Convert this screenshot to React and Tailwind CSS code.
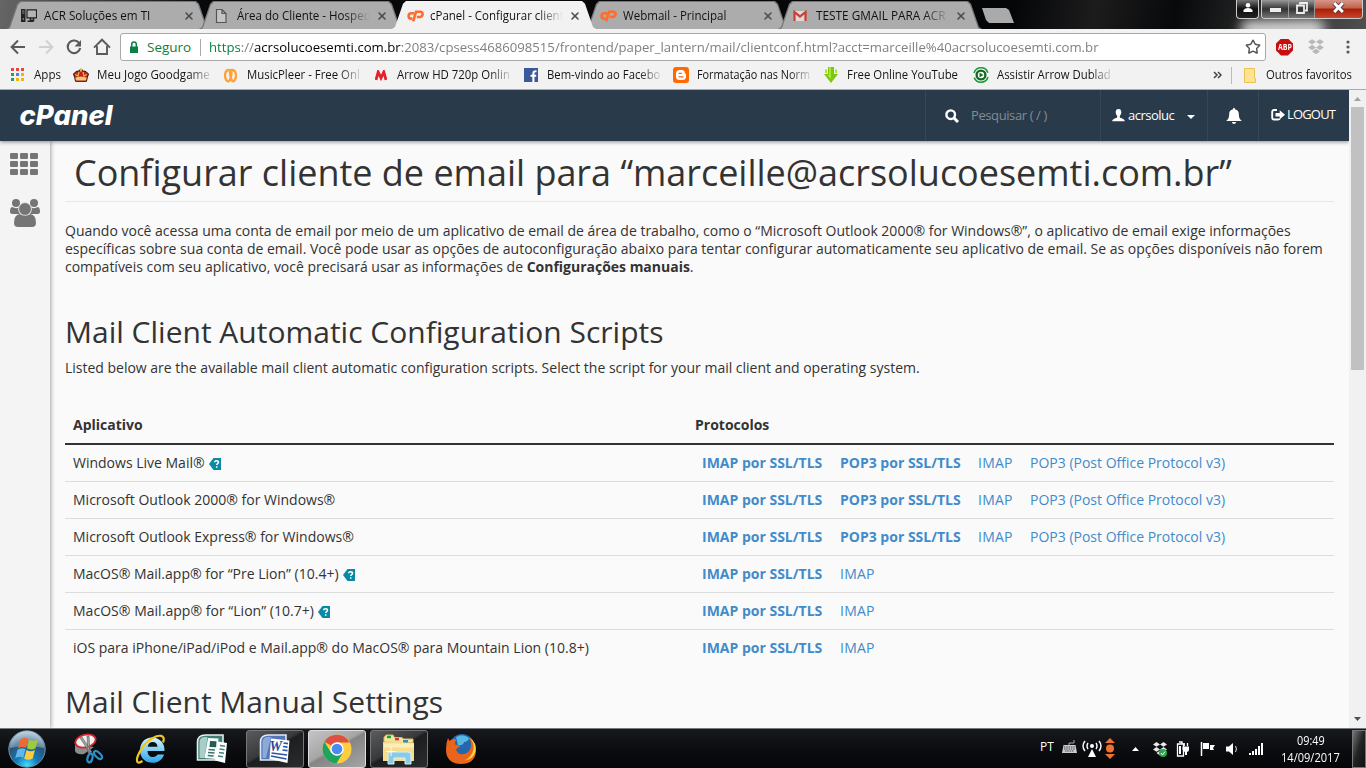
import React, { useLayoutEffect, useRef } from "react";
import { X, Star } from "lucide-react";

/* Text run set to a given width, either by tracking or by condensing. */
function T({ w, sq, className = "", children }) {
  const ref = useRef(null);
  useLayoutEffect(() => {
    const el = ref.current;
    el.style.letterSpacing = "0px";
    el.style.transform = "none";
    const nat = el.offsetWidth;
    if (sq) el.style.transform = `scaleX(${w / nat})`;
    else el.style.letterSpacing = `${(w - nat) / el.textContent.length}px`;
  }, [w, sq]);
  return (
    <span className={`block shrink-0 whitespace-nowrap ${className}`} style={{ width: w }}>
      <span ref={ref} className="inline-block origin-left">{children}</span>
    </span>
  );
}

const CpIcon = () => (
  <svg width="17" height="16" viewBox="0 0 17 16" fill="none" stroke="#ff6c2c" strokeWidth="2.6">
    <path d="M7.2 5.300H4.400C2.600 5.300 1.600 6.600 1.600 8s.9 2.600 2.500 2.600h1.300" />
    <path d="M6.200 13.400 9 3.800h4.200c1.600 0 2.400.9 2.400 2.200 0 1.700-1.100 3-2.900 3H9.800" />
  </svg>
);
const PcIcon = () => (
  <svg width="16" height="16" viewBox="0 0 16 16">
    <path d="M0 1h4.500v13H0z" fill="#222" /><path d="M1 3h2.500M1 5h2.500" stroke="#888" /><circle cx="2.300" cy="11" r=".8" fill="#aaa" />
    <path d="M6 1.800h9.500v8H6z" fill="#b4b4b4" stroke="#222" strokeWidth="1.200" /><path d="M9.500 10v2.500h3V10M6.500 13.300h6" fill="none" stroke="#222" strokeWidth="1.500" />
  </svg>
);
const PageIcon = () => (
  <svg width="16" height="16" viewBox="0 0 16 16" fill="#c4c4c4" stroke="#555" strokeWidth="1.200"><path d="M2.500 1.500h5.500l4 4v9H2.500zM8 1.500v4h4" /></svg>
);
const GmailIcon = () => (
  <svg width="16" height="16" viewBox="0 0 16 16"><path d="M1 3h12v10H1z" fill="#d9d9d9" /><path d="M1.500 13V4L7 8.500 12.500 4v9" fill="none" stroke="#d03c33" strokeWidth="2.200" /></svg>
);

function Tab({ icon, title, w, active }) {
  return (
    <div className={`relative -mr-[11px] h-[28px] w-[204px] shrink-0 [clip-path:polygon(0_100%,3px_93%,11px_10%,14px_0,190px_0,193px_10%,201px_93%,204px_100%)] ${active ? "z-10 bg-[#f2f2f2]" : "bg-[#777]"}`}>
      <div className={`flex h-full items-center pl-[15px] ${active ? "bg-[#f2f2f2] pt-[1px]" : "mt-px bg-[#acacac] [clip-path:polygon(1px_100%,4px_93%,12px_10%,15px_0,189px_0,192px_10%,200px_93%,203px_100%)]"}`}>
        <span className="mr-[6px] w-[17px]">{icon}</span>
        <div className={`w-[133px] overflow-hidden ${w > 125 ? "[mask-image:linear-gradient(to_right,black_108px,transparent_133px)]" : ""}`}>
          <T w={w} sq className="text-[12px] text-[#111]">{title}</T>
        </div>
        <X className="ml-[6px] text-[#4d4d4d]" size={12} strokeWidth={3.200} />
      </div>
    </div>
  );
}

function WindowButtons() {
  return (
    <div className="absolute top-0 left-[1236px] flex h-[19px] gap-[2px]">
      <div className="flex w-[23px] items-center justify-center rounded-b-[4px] border border-t-0 border-[#ccc] bg-gradient-to-b from-[#777] via-[#111] to-[#222]">
        <svg className="-mt-[3px]" width="10" height="11" viewBox="0 0 10 11" fill="#fff"><circle cx="5" cy="3.200" r="2.300" /><path d="M.5 10V8Q2 6 5 6t4.500 2v2z" /></svg>
      </div>
      <div className="flex overflow-hidden rounded-b-[4px] border border-t-0 border-[#ccc]">
        <div className="flex w-[27px] items-center justify-center border-r border-[#999] bg-gradient-to-b from-[#999] via-[#333] to-[#777]"><div className="mt-[2px] h-[4px] w-[11px] bg-[#eee]" /></div>
        <div className="flex w-[26px] items-center justify-center border-r border-[#999] bg-gradient-to-b from-[#999] via-[#333] to-[#777]">
          <svg className="-mt-[3px]" width="12" height="12" viewBox="0 0 12 12" fill="none" stroke="#eee" strokeWidth="1.800"><path d="M4 2.500V1h7v7.500H9" /><path d="M1 3.500h7v7.500H1z" /></svg>
        </div>
        <div className="flex w-[47px] items-center justify-center bg-[linear-gradient(to_bottom,#d79688_0,#c2604a_45%,#a91d06_50%,#c8452b_100%)]">
          <svg className="-mt-[3px]" width="13" height="11" viewBox="0 0 13 11"><path d="M2 1 11 10M11 1 2 10" stroke="#5b3540" strokeWidth="4.600" /><path d="M2.200 1 10.800 10M10.800 1 2.200 10" stroke="#fff" strokeWidth="3" /></svg>
        </div>
      </div>
    </div>
  );
}

function TabStrip() {
  return (
    <div className="relative flex h-[29px] shrink-0 overflow-hidden bg-[linear-gradient(100deg,#666_0,#333_120px,#08090b_200px,#050608_1000px,#1c1c1d_1080px,#08090a_1160px,#555_1366px)] pt-px pl-[6px]">
      <div className="absolute top-[20px] left-[1240px] h-[18px] w-[85px] rounded-full bg-white/80 blur-[6px]" />
      <Tab icon={<PcIcon />} title="ACR Soluções em TI" w={106} />
      <Tab icon={<PageIcon />} title="Área do Cliente - Hosped" w={134} />
      <Tab icon={<CpIcon />} title="cPanel - Configurar client" w={134} active />
      <Tab icon={<CpIcon />} title="Webmail - Principal" w={103} />
      <Tab icon={<GmailIcon />} title="TESTE GMAIL PARA ACR" w={130} />
      <div className="mt-[7px] ml-[11px] h-[15px] w-[32px] bg-[#aaa] [clip-path:polygon(0_0,24px_0,27px_2px,32px_100%,7px_100%,4px_12px)]" />
      <WindowButtons />
    </div>
  );
}

const DropboxIcon = ({ c, s = 16 }) => (
  <svg width={s} height={s} viewBox="0 0 16 16" fill={c}><path d="m4.500 1 3.500 2.400-3.500 2.400L1 3.400zM11.500 1 15 3.400l-3.500 2.400L8 3.400zM4.500 6 8 8.400l-3.500 2.400L1 8.400zM11.500 6 15 8.400l-3.500 2.400L8 8.400zM8 9.500l3.500 2.400L8 14.500l-3.500-2.600z" /></svg>
);

function Toolbar() {
  return (
    <div className="flex h-[32px] shrink-0 items-center bg-[#f2f2f2] pt-[4px]">
      <svg className="ml-[10px] shrink-0" width="16" height="16" viewBox="0 0 16 16" fill="none" stroke="#5a5a5a" strokeWidth="2"><path d="M15 8H2M8 1.500 1.600 8 8 14.500" /></svg>
      <svg className="ml-[12px] shrink-0" width="16" height="16" viewBox="0 0 16 16" fill="none" stroke="#d0d0d0" strokeWidth="2"><path d="M1 8h13M8 1.500 14.400 8 8 14.500" /></svg>
      <svg className="ml-[12px] shrink-0" width="16" height="16" viewBox="0 0 16 16"><path d="M13.400 4.500A6.300 6.300 0 1 0 14.200 9" fill="none" stroke="#5a5a5a" strokeWidth="2.100" /><path d="M15 1v6.500H8.500z" fill="#5a5a5a" /></svg>
      <svg className="ml-[11px] shrink-0" width="18" height="18" viewBox="0 0 18 18" fill="none" stroke="#5a5a5a" strokeWidth="1.900"><path d="M1 9.600 9 1.700l8 7.900M4 8v8h10V8" /></svg>
      <div className="ml-[9px] flex h-[28px] w-[1146px] shrink-0 items-center rounded-[3px] border border-[#a9a9a9] bg-white text-[13.500px]">
        <svg className="ml-[8px]" width="10" height="13" viewBox="0 0 10 13"><path d="M1 5.500h8V12H1z" fill="#0b8043" /><path d="M2.700 6V3.200a2.300 2.300 0 0 1 4.600 0V6" fill="none" stroke="#0b8043" strokeWidth="1.500" /></svg>
        <T w={44} sq className="ml-[8px] text-[#0b8043]">Seguro</T>
        <span className="mr-[8px] ml-[9px] h-[17px] w-px bg-[#aaa]" />
        <T w={890} sq className="text-[#808080]">
          <span className="text-[#0b8043]">https</span>://<span className="text-black">acrsolucoesemti.com.br</span>:2083/cpsess4686098515/frontend/paper_lantern/mail/clientconf.html?acct=marceille%40acrsolucoesemti.com.br
        </T>
        <Star className="mr-[4px] ml-auto text-[#555]" size={16} strokeWidth={2.200} strokeLinejoin="miter" />
      </div>
      <div className="ml-[10px] flex size-[17px] shrink-0 items-center justify-center bg-[#c70d0d] [clip-path:polygon(30%_0,70%_0,100%_30%,100%_70%,70%_100%,30%_100%,0_70%,0_30%)]">
        <T w={14} sq className="text-[8px] leading-none font-bold text-white">ABP</T>
      </div>
      <span className="ml-[14px]"><DropboxIcon c="#b8b8b8" s={18} /></span>
      <svg className="ml-[21px]" width="4" height="14" viewBox="0 0 4 14" fill="#5a5a5a"><circle cx="2" cy="2" r="1.600" /><circle cx="2" cy="7" r="1.600" /><circle cx="2" cy="12" r="1.600" /></svg>
    </div>
  );
}

const bmIcons = {
  apps: (
    <svg width="14" height="14" viewBox="0 0 14 14">
      <path d="M0 0h3v3H0zM5 0h3v3H5zM10 0h3v3h-3z" fill="#e8453c" />
      <path d="M0 5h3v3H0z" fill="#2d9d57" /><path d="M5 5h3v3H5z" fill="#4688f1" /><path d="M10 5h3v3h-3z" fill="#f6b400" />
      <path d="M0 10h3v3H0z" fill="#2d9d57" /><path d="M5 10h3v3H5zM10 10h3v3h-3z" fill="#f6b400" />
    </svg>
  ),
  crown: (
    <svg width="16" height="14" viewBox="0 0 16 14"><path d="M2.500 13.300 1.700 9.500.5 6l2.500-2.500L5.500 3 8 1l2.500 2 2.500.500L15.500 6l-1.200 3.500-.8 3.800z" fill="#c21f1f" stroke="#2a1505" /><path d="M2 6.500 5 8l1-4M14 6.500 11 8l-1-4" fill="none" stroke="#e8b24c" strokeWidth="1.300" /><path d="M2.300 9.500 8 8.500l5.700 1-.7 3H3z" fill="#f0c878" /><path d="M8 .5v3" stroke="#e8b24c" strokeWidth="2" /></svg>
  ),
  music: (
    <svg width="15" height="15" viewBox="0 0 15 15" fill="none" stroke="#ffa238" strokeWidth="2.800"><path d="M3.500 12.500C1 9 1.500 2 6 2c4 0 2.500 8 .5 10.500-1 1.200-2.500.8-3 0M11.500 12.500C14 9 13.500 2 9 2 7.500 2 7 3 7 4.500c0 3 1 6.500 2 8 .8 1.200 2 .8 2.500 0" strokeWidth="2.300" /></svg>
  ),
  arrow: <svg width="12" height="11" viewBox="0 0 12 11"><path d="m1 10 2.200-8L6 8l2.800-6L11 10" fill="none" stroke="#e3212d" strokeWidth="2.800" /></svg>,
  fb: <svg width="14" height="14" viewBox="0 0 14 14"><path d="M0 0h14v14H0z" fill="#3b5998" /><path d="M9.400 14V5.200c0-1.500.8-2 3.100-1.900M6.500 7.800h5.700" fill="none" stroke="#fff" strokeWidth="2.100" /></svg>,
  blogger: <svg width="16" height="16" viewBox="0 0 16 16"><rect width="16" height="16" rx="3" fill="#ff6a00" /><path d="M6.500 3h2.300c1.800 0 3 1.300 3 2.800 0 .8.300 1 1.200 1v2.900c0 2-1.400 3.300-3.300 3.300H6.400C4.400 13 3 11.700 3 9.700V6.400C3 4.400 4.500 3 6.500 3z" fill="#fff" /><path d="M6 6.300h2.500M6 9.800h4" stroke="#ff6a00" strokeWidth="1.300" strokeLinecap="round" /></svg>,
  down: <svg width="14" height="16" viewBox="0 0 14 16"><path d="M4 0h6v7h4l-7 9L0 7h4z" fill="#7cc80f" /><path d="M1 2.500V6h2V2.500M11 2.500V6h2V2.500" fill="#a9e72f" /><path d="M5 0h2v12L3 8h2z" fill="#a8e63c" /></svg>,
  play: <svg width="16" height="16" viewBox="0 0 16 16"><circle cx="8" cy="8" r="7.200" fill="#fff" stroke="#169b2c" strokeWidth="1.600" strokeDasharray="18 4.600" strokeDashoffset="-2" /><circle cx="8" cy="8" r="4.400" fill="#fff" stroke="#19662a" strokeWidth="2.400" /><path d="m6.500 5.600 4 2.400-4 2.400z" fill="#117a20" /></svg>,
};

function Bookmark({ icon, iw, gap, w, title, fade, mr }) {
  return (
    <div className="flex shrink-0 items-center" style={{ marginRight: mr }}>
      <span className="flex shrink-0" style={{ width: iw, marginRight: gap }}>{bmIcons[icon]}</span>
      <span className={fade ? "[mask-image:linear-gradient(to_right,black_82%,rgba(0,0,0,.15))]" : ""}><T w={w} sq>{title}</T></span>
    </div>
  );
}

function Bookmarks() {
  return (
    <div className="flex h-[29px] shrink-0 items-center border-b border-[#aaa] bg-[#f2f2f2] pl-[11px] text-[12px] text-[#151515]">
      <Bookmark icon="apps" iw={14} gap={9} w={27} title="Apps" mr={12} />
      <Bookmark icon="crown" iw={16} gap={8} w={113} title="Meu Jogo Goodgame" fade mr={13} />
      <Bookmark icon="music" iw={15} gap={9} w={113} title="MusicPleer - Free Onl" fade mr={15} />
      <Bookmark icon="arrow" iw={13} gap={9} w={113} title="Arrow HD 720p Onlin" fade mr={14} />
      <Bookmark icon="fb" iw={14} gap={9} w={113} title="Bem-vindo ao Facebo" fade mr={13} />
      <Bookmark icon="blogger" iw={16} gap={8} w={113} title="Formatação nas Norm" fade mr={14} />
      <Bookmark icon="down" iw={14} gap={9} w={111} title="Free Online YouTube" mr={15} />
      <Bookmark icon="play" iw={16} gap={8} w={114} title="Assistir Arrow Dublad" fade mr={102} />
      <svg width="9" height="8" viewBox="0 0 9 8" fill="none" stroke="#444" strokeWidth="1.500"><path d="m1 1 3 3-3 3M5 1l3 3-3 3" /></svg>
      <span className="mr-[12px] ml-[9px] h-[17px] w-px bg-[#bbb]" />
      <svg width="13" height="15" viewBox="0 0 13 15"><path d="M.5.500h10v10h1v4H.5z" fill="#ffe392" stroke="#e8c34f" /></svg>
      <T w={86} sq className="ml-[9px]">Outros favoritos</T>
    </div>
  );
}

function Header() {
  return (
    <header className="relative z-10 flex h-[51px] w-[1349px] shrink-0 items-stretch bg-[#293a4a] text-white shadow-[0_1px_4px_rgba(0,0,0,.45)]">
      <svg className="ml-[18px] h-[51px] w-[100px]" viewBox="0 0 100 51">
        <text x="1.500" y="35" textLength="93" lengthAdjust="spacingAndGlyphs" fill="#fff" fontFamily="Inter, sans-serif" fontWeight="800" fontStyle="italic" fontSize="27">cPanel</text>
      </svg>
      <div className="ml-auto flex items-center">
        <div className="flex h-full w-[175px] items-center border-l border-[#33485b] pl-[19px]">
          <svg width="14" height="14" viewBox="0 0 14 14" fill="none" stroke="#fff" strokeWidth="2.400"><circle cx="5.700" cy="5.700" r="4.300" /><path d="m9 9 4 4" strokeWidth="3" /></svg>
          <T w={76} className="ml-[12px] text-[13px] text-[#848c94]">Pesquisar ( / )</T>
        </div>
        <div className="flex h-full w-[107px] items-center border-l border-[#33485b] pl-[11px]">
          <svg width="13" height="13" viewBox="0 0 13 13" fill="#fff"><path d="M6.500 0C4.300 0 3.600 1.600 3.700 3.500c.1 1.600.8 2.800 1.500 3.400v1.300C4.300 9.300.2 9.600.2 12.300h12.600c0-2.700-4.100-3-5-4.100V6.900c.7-.6 1.400-1.800 1.500-3.400C9.400 1.600 8.700 0 6.500 0z" /></svg>
          <T w={46} className="ml-[3px] text-[13px]">acrsoluc</T>
          <svg className="mt-[3px] ml-[13px]" width="8" height="4" viewBox="0 0 8 4"><path d="M0 0h8L4 4z" fill="#fff" /></svg>
        </div>
        <div className="flex h-full w-[51px] items-center border-l border-[#33485b] pl-[18px]">
          <svg width="16" height="16" viewBox="0 0 16 16" fill="#fff"><path d="M8 0c-.8 0-1 .6-1 1.200C4.200 1.800 3.200 3.500 3.200 6c0 4-1.200 5.500-3 7h15.600c-1.800-1.500-3-3-3-7 0-2.500-1-4.200-3.800-4.800C9 .6 8.800 0 8 0zM6 14h4c0 1.200-.9 2-2 2s-2-.8-2-2z" /></svg>
        </div>
        <div className="flex h-full w-[91px] items-center border-l border-[#33485b] pb-[2px] pl-[12px]">
          <svg width="14" height="12" viewBox="0 0 14 12"><path d="M6 1H3C1.700 1 1.200 1.700 1.200 3v5.500c0 1.300.5 2 1.800 2h4c1 0 1.600-.4 1.800-1" fill="none" stroke="#fff" strokeWidth="1.900" /><path d="M4.500 4h4.200V1.200L14 5.800 8.700 10.300V7.500H4.500z" fill="#fff" /></svg>
          <T w={48} className="ml-[2px] text-[13px]">LOGOUT</T>
        </div>
      </div>
    </header>
  );
}

function Sidebar() {
  return (
    <aside className="flex w-[50px] shrink-0 flex-col items-start bg-[#f4f4f4] pl-[10px] shadow-[1px_0_4px_rgba(0,0,0,.35)]">
      <svg className="mt-[12px]" width="28" height="22" viewBox="0 0 28 22" fill="#757575">
        {[0, 8, 16].map((y) => [0, 10, 20].map((x) => <rect key={`${x}-${y}`} x={x} y={y} width="8" height="6" rx="1.300" />))}
      </svg>
      <svg className="mt-[24px]" width="30" height="28" viewBox="0 0 30 28" fill="#757575">
        <circle cx="6" cy="4" r="4" /><circle cx="24" cy="4" r="4" />
        <path d="M2 8q4 2 7 .5Q8 12 10 15H2.500Q0 15 0 13 0 8.500 2 8zM28 8q-4 2-7 .5 1 3.500-1 6.500h7.500Q30 15 30 13q0-4.500-2-5z" />
        <circle cx="15" cy="10" r="6.400" stroke="#f4f4f4" strokeWidth=".8" />
        <path d="M9.500 15q5.500 3.500 11 0 5.500 1 5.500 9 0 4-4 4H8q-4 0-4-4 0-8 5.500-9z" />
      </svg>
    </aside>
  );
}

const Help = () => (
  <svg className="mt-[2px] ml-[4px]" width="12" height="12" viewBox="0 0 12 12"><path d="M0 6 4.500 0H12v12H4.500z" fill="#0a89a5" /><path d="M5.600 4.300c.1-1 .9-1.500 1.900-1.500 1.200 0 2 .6 2 1.500 0 1.300-1.800 1.300-1.800 2.700M7.700 8.200v1.500" fill="none" stroke="#fff" strokeWidth="1.500" /></svg>
);

const rows = [
  ["Windows Live Mail®", 132, true, true],
  ["Microsoft Outlook 2000® for Windows®", 262, false, true],
  ["Microsoft Outlook Express® for Windows®", 281, false, true],
  ["MacOS® Mail.app® for “Pre Lion” (10.4+)", 266, true, false],
  ["MacOS® Mail.app® for “Lion” (10.7+)", 241, true, false],
  ["iOS para iPhone/iPad/iPod e Mail.app® do MacOS® para Mountain Lion (10.8+)", 516, false, false],
];

function Content() {
  return (
    <main className="ml-[15px] flex w-[1269px] flex-col text-[14px] leading-[18px] text-[#333]">
      <h1 className="flex h-[61px] shrink-0 items-center border-b border-[#e8e8e8] pl-[9px] text-[36px] leading-[40px]">
        <T w={1158} className="mt-[4px]">Configurar cliente de email para “marceille@acrsolucoesemti.com.br”</T>
      </h1>
      <div className="mt-[20px]">
        <T w={1226}>Quando você acessa uma conta de email por meio de um aplicativo de email de área de trabalho, como o “Microsoft Outlook 2000® for Windows®”, o aplicativo de email exige informações</T>
        <T w={1258}>específicas sobre sua conta de email. Você pode usar as opções de autoconfiguração abaixo para tentar configurar automaticamente seu aplicativo de email. Se as opções disponíveis não forem</T>
        <T w={629}>compatíveis com seu aplicativo, você precisará usar as informações de <b>Configurações manuais</b>.</T>
      </div>
      <h2 className="mt-[36px] text-[30px] leading-[40px]"><T w={598}>Mail Client Automatic Configuration Scripts</T></h2>
      <div className="mt-[7px]"><T w={855}>Listed below are the available mail client automatic configuration scripts. Select the script for your mail client and operating system.</T></div>
      <div className="mt-[39px] flex h-[29px] shrink-0 border-b-2 border-[#333] pl-[8px] font-bold">
        <T w={70}>Aplicativo</T>
        <T w={74} className="ml-[552px]">Protocolos</T>
      </div>
      {rows.map(([name, w, help, pop], i) => (
        <div key={name} className={`flex shrink-0 items-center ${i < 5 ? "h-[37px] border-b border-[#ddd]" : "h-[36px]"}`}>
          <div className="flex w-[637px] items-center pl-[8px]"><T w={w}>{name}</T>{help && <Help />}</div>
          <div className="flex items-center text-[#428bca]">
            <T w={120} className="font-bold">IMAP por SSL/TLS</T>
            {pop && <T w={121} className="ml-[18px] font-bold">POP3 por SSL/TLS</T>}
            <T w={35} className={pop ? "ml-[17px]" : "ml-[18px]"}>IMAP</T>
            {pop && <T w={195} className="ml-[17px]">POP3 (Post Office Protocol v3)</T>}
          </div>
        </div>
      ))}
      <h2 className="mt-[16px] text-[30px] leading-[40px]"><T w={378}>Mail Client Manual Settings</T></h2>
    </main>
  );
}

function Scrollbar() {
  return (
    <div className="flex w-[17px] shrink-0 flex-col items-center bg-[#f1f1f1]">
      <svg className="mt-[7px]" width="7" height="4"><path d="M0 4h7L3.500 0z" fill="#a3a3a3" /></svg>
      <div className="mt-[6px] h-[263px] w-[13px] bg-[#c1c1c1]" />
      <svg className="mt-auto mb-[7px]" width="7" height="4"><path d="M0 0h7L3.500 4z" fill="#505050" /></svg>
    </div>
  );
}

function StartOrb() {
  return (
    <svg width="38" height="38" viewBox="0 0 38 38">
      <defs>
        <radialGradient id="orb" cx=".5" cy=".95" r=".9"><stop offset="0" stopColor="#3fe0ff" /><stop offset=".35" stopColor="#1477b5" /><stop offset=".7" stopColor="#2b5478" /><stop offset="1" stopColor="#9ab9cf" /></radialGradient>
      </defs>
      <circle cx="19" cy="19" r="18.200" fill="url(#orb)" stroke="#6d93ab" />
      <path d="M2 18a17 17 0 0 1 34 0Q19 14 2 18z" fill="#fff" opacity=".3" />
      <path d="M12.500 9.500q4-3 7.500-.5l-2 9q-4-2-8 .5z" fill="#ee6a35" /><path d="M21 9.500q4.500 2.500 9 0l-2.500 8.800q-4 2.500-8.500 0z" fill="#9bcc3c" />
      <path d="M9.500 19.800q4-3 8-.5l-2.300 8.500q-4-2.500-8 .5z" fill="#62b7ea" /><path d="M18.500 20q4.500 2.500 8.500 0l-2.300 8.500q-4.500 2.500-8.500 0z" fill="#fdcb40" />
    </svg>
  );
}
const Snip = () => (
  <svg width="32" height="32" viewBox="0 0 32 32">
    <path d="M2 12v6q2 4 9 3l10-7z" fill="#8c8c8c" />
    <ellipse cx="12.500" cy="8" rx="10.300" ry="6.300" fill="#f3f3f3" stroke="#d1262f" strokeWidth="1.800" transform="rotate(-14 12.500 8)" />
    <path d="m7 5 2-1 10 15-2 1zM14 3h2l1 17h-2z" fill="#a6a6a6" stroke="#555" strokeWidth=".6" />
    <g fill="none" stroke="#2e8fce" strokeWidth="2.200"><ellipse cx="17" cy="25" rx="2.400" ry="4.500" transform="rotate(15 17 25)" /><ellipse cx="25" cy="22" rx="2.400" ry="5" transform="rotate(-45 25 22)" /></g>
  </svg>
);
const Ie = () => (
  <svg width="32" height="32" viewBox="0 0 32 32" fill="none">
    <defs><linearGradient id="ieg" x2="0" y2="1"><stop stopColor="#d3f5ff" /><stop offset="1" stopColor="#2aa5ea" /></linearGradient></defs>
    <path d="M17 4.500C24.500 4.500 30 10 29.500 18H12.500c.2 4 2.500 6 5.500 6 2.300 0 3.700-1 4.500-2.500h6.500C27.500 26.500 23.500 29.800 17.700 29.800 10 29.800 5 24.500 5 17.200S10 4.500 17 4.500zM12.700 13.800h9.800c-.2-3-2-4.800-4.700-4.800-2.800 0-4.700 1.700-5.100 4.800z" fill="url(#ieg)" />
    <path d="M28 9.500c3-8-4-8.500-12-3.500S0 25 2.500 29q1.500 1.500 5-1" stroke="#f4c51e" strokeWidth="2.200" />
  </svg>
);
const Publisher = () => (
  <svg width="32" height="32" viewBox="0 0 32 32">
    <path d="M1.500 27V9q0-7 8-7H27v25z" fill="#3f7f7a" stroke="#e4f1ee" strokeWidth="1.600" />
    <path d="M3.500 25V9.500Q3.500 4 9 4h2.500L8.500 25z" fill="#a9cdc7" />
    <path d="m12 5 10.500.5L20.500 26l-12-1z" fill="#fbfdfc" />
    <path d="m14 8 6.500.3-.4 6-6.600-.3z" fill="#225d58" /><path d="m12.500 16.500 6.500.500M12 19.500l6.500.5M11.700 22.500l6 .5" stroke="#38716d" strokeWidth="1.500" />
    <path d="m22 8.500 9 1.500-2 20-10-2.500z" fill="#fff" /><path d="m24 12.500 5 .8M23.500 16l5 .8M23 19.500l5 .8M22 23l5 .8" stroke="#438280" strokeWidth="1.500" />
  </svg>
);
const Word = () => (
  <svg width="32" height="32" viewBox="0 0 32 32">
    <path d="M1.500 27V9q0-7 8-7H27v25z" fill="#5277b9" stroke="#dfe8f7" strokeWidth="1.600" />
    <path d="M3.500 25V9.500Q3.500 4 9 4h3L7 25z" fill="#8da9d8" />
    <path d="m12 5.500 18.500 2L28.500 30l-18-4z" fill="#fff" />
    <text x="10.500" y="18" fill="#234a9b" fontFamily="Liberation Serif, serif" fontWeight="700" fontStyle="italic" fontSize="14">W</text>
    <path d="m24.500 10 4.500.6M24 13.500l4.500.6M23.500 17l5 .6M12.500 20l15.500 2M12 23l15.500 3" stroke="#2d55a7" strokeWidth="1.700" />
  </svg>
);
const Chrome = () => (
  <svg width="30" height="30" viewBox="0 0 30 30"><circle cx="15" cy="15" r="14.500" fill="#ffcd40" /><path d="M15 15 2.400 7.800A14.500 14.500 0 0 1 27.600 8.500H15z" fill="#dd5144" /><path d="M2.400 7.800A14.500 14.500 0 0 0 14.500 29.500L21 18.500 15 21.500 9 18.500z" fill="#1da462" /><circle cx="15" cy="15" r="6.700" fill="#fff" /><circle cx="15" cy="15" r="5.300" fill="#4a8af4" /></svg>
);
const Explorer = () => (
  <svg width="34" height="32" viewBox="0 0 34 32">
    <path d="M2 9V4.500L4 2h7l1.500 2.500H20L21.500 6H31v4z" fill="#f7e4a0" stroke="#d9b960" />
    <path d="M5 4h4" stroke="#1aa32e" strokeWidth="2.400" /><path d="M13 6.200h4" stroke="#d23a2b" strokeWidth="2.400" /><path d="M21 8.200h5" stroke="#2191d6" strokeWidth="2.400" />
    <path d="M1 9h20l1 1h10v18H1z" fill="#f6dd8c" /><path d="M2 10.500h30v4H2z" fill="#fbeeb9" />
    <path d="M6 31V22q0-3 3-3h17q3 0 3 3v9h-6v-6H12v6z" fill="#8ccbe8" stroke="#d7f2fb" /><path d="M9 14v9M4.500 18.500h9" stroke="#fff" opacity=".9" />
  </svg>
);
const Firefox = () => (
  <svg width="32" height="32" viewBox="0 0 32 32">
    <circle cx="17" cy="13.500" r="12.500" fill="#2467ac" /><path d="M11 4q7-4 13 1-1 4-5 4-1 4-6 3z" fill="#55b8e6" />
    <path d="M3 5 4.500 8q3-3 7-1.500Q9.500 8.500 10 11.500l5.500 1.200-4.500 3.500q1.500 5.500 7 5 6.500-1 8-7.500.5-5-2-9.500 7 5.500 7 12.300Q31 31 16 31 1 30.500 1 16.500 1 9.500 3 5z" fill="#ea651b" />
    <path d="M24.500 4.500q5 5 4 12-2 8-9 11 9-1.500 11-9 1.500-9-6-14z" fill="#ffd43c" />
  </svg>
);

function TaskButton({ children, active, className }) {
  return (
    <div className={`flex h-[38px] w-[58px] shrink-0 items-center justify-center rounded-[3px] border ${active ? "border-[#ddd] bg-[linear-gradient(150deg,#c4c4c4_0,#a6a6a6_45%,#858585_50%,#a5a5a5_100%)]" : "border-[#777] bg-[linear-gradient(150deg,#5c5c5e_0,#38393b_45%,#1d1e20_50%,#2b2c2e_100%)]"} ${className}`}>{children}</div>
  );
}

function Taskbar() {
  return (
    <footer className="flex h-[40px] shrink-0 items-center border-t border-[#74797e] bg-gradient-to-b from-[#17191c] via-[#0b0d10] to-[#050608] text-[12px] text-white">
      <span className="ml-[8px]"><StartOrb /></span>
      <span className="ml-[27px]"><Snip /></span>
      <span className="ml-[30px]"><Ie /></span>
      <span className="ml-[29px]"><Publisher /></span>
      <TaskButton className="ml-[18px]"><Word /></TaskButton>
      <TaskButton active className="ml-[4px]"><Chrome /></TaskButton>
      <TaskButton className="ml-[4px]"><Explorer /></TaskButton>
      <span className="ml-[17px]"><Firefox /></span>
      <T w={14} sq className="mb-[4px] ml-[563px]">PT</T>
      <svg className="mb-[3px] ml-[7px] shrink-0" width="17" height="14" viewBox="0 0 17 14"><path d="M8 5V3h5V0" fill="none" stroke="#aaa" /><path d="M2.500 5h12l1.500 8H1z" fill="#ccc" /><path d="M3 7h11M3 9h11M4 11h9" stroke="#444" strokeDasharray="1.500 .8" /></svg>
      <svg className="ml-[4px] shrink-0" width="20" height="18" viewBox="0 0 20 18" fill="none" stroke="#fff" strokeWidth="1.400"><path d="M3 1q-4 5 0 10M6 3q-2 3 0 6M14 3q2 3 0 6M17 1q4 5 0 10" /><circle cx="10" cy="6" r="2" fill="#fff" stroke="none" /><path d="m10 9 4 8H6z" fill="#fff" stroke="none" /></svg>
      <svg className="ml-[3px] shrink-0" width="10" height="21" viewBox="0 0 10 21" fill="#ed7130"><path d="M0 5h10L5 0zM0 16h10l-5 5z" /><circle cx="5" cy="10.500" r="4" /></svg>
      <svg className="ml-[17px] shrink-0" width="7" height="4"><path d="M0 4h7L3.500 0z" fill="#fff" /></svg>
      <span className="relative ml-[13px] shrink-0"><DropboxIcon c="#e9e9e9" s={16} /><svg className="absolute top-[8px] left-[7px]" width="8" height="8"><circle cx="4" cy="4" r="4" fill="#27a744" /><path d="m2 4 1.500 2L6 2.500" fill="none" stroke="#fff" /></svg></span>
      <svg className="ml-[8px] shrink-0" width="14" height="16" viewBox="0 0 14 16"><path d="M1.500 3h6v12h-6zM3 1h3v2" fill="none" stroke="#fff" strokeWidth="1.300" /><path d="M3 5h2v8H3z" fill="#fff" /><path d="M6.500 5.500h6.500v3q0 2-2 2.500v3H9v-3q-2-.5-2.500-2.500z" fill="#fff" /><path d="M8.200 2v3M11.500 2v3" stroke="#fff" strokeWidth="1.300" /></svg>
      <svg className="ml-[10px] shrink-0" width="15" height="14" viewBox="0 0 15 14"><path d="M1.500 0v14" stroke="#fff" strokeWidth="1.500" /><path d="M3 1h6v6H3zM10 3h5l-2 3 1 2h-4z" fill="#fff" /></svg>
      <svg className="ml-[11px] shrink-0" width="14" height="14" viewBox="0 0 14 14"><path d="M0 4.500h3L7 1v12L3 9.500H0z" fill="#fff" /><path d="M9.500 4q2 3 0 6" fill="none" stroke="#ddd" /></svg>
      <svg className="ml-[9px] shrink-0" width="15" height="12" viewBox="0 0 15 12" fill="#fff"><path d="M0 10h2v2H0zM3 8h2v4H3zM6 6h2v6H6zM9 3h2v9H9zM12 0h2v12h-2z" /></svg>
      <div className="ml-[17px] flex w-[59px] shrink-0 flex-col items-center text-[12px] leading-[17px]"><T w={28} sq>09:49</T><T w={59} sq>14/09/2017</T></div>
      <div className="ml-auto h-[38px] w-[14px] shrink-0 border border-[#777] bg-gradient-to-br from-[#777] via-[#222] to-[#111]" />
    </footer>
  );
}

export default function App() {
  return (
    <div className="flex h-[768px] w-[1366px] flex-col overflow-hidden bg-[#fafafa] [font-family:'Open_Sans','Noto_Sans',sans-serif]">
      <TabStrip />
      <Toolbar />
      <Bookmarks />
      <div className="flex h-[638px] shrink-0">
        <div className="flex w-[1349px] flex-col overflow-hidden">
          <Header />
          <div className="flex h-[587px]"><Sidebar /><Content /></div>
        </div>
        <Scrollbar />
      </div>
      <Taskbar />
    </div>
  );
}
